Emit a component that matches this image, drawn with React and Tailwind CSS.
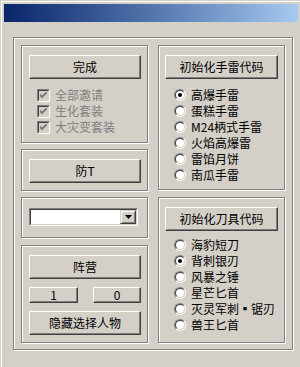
import React from "react";

const FONT = { fontFamily: '"Noto Sans CJK SC", "Liberation Sans", sans-serif' };

function Btn({ children, className = "" }) {
  return (
    <div
      className={
        "flex items-center justify-center bg-[#d4d0c8] text-[12px] leading-none text-black border border-t-white border-l-white border-r-[#404040] border-b-[#404040] shadow-[inset_-1px_-1px_0_#808080] " +
        className
      }
    >
      {children}
    </div>
  );
}

function Group({ children, className = "" }) {
  return (
    <div
      className={
        "border border-[#808080] shadow-[inset_1px_1px_0_#fff,1px_1px_0_#fff] " +
        className
      }
    >
      {children}
    </div>
  );
}

function Check({ label }) {
  return (
    <div className="flex h-[16px] items-center">
      <div className="ml-[8px] flex h-[13px] w-[13px] items-center justify-center border border-t-[#808080] border-l-[#808080] border-r-white border-b-white">
        <div className="flex h-full w-full items-center justify-center border border-t-[#404040] border-l-[#404040] border-r-[#d4d0c8] border-b-[#d4d0c8] bg-[#d4d0c8]">
          <svg width="7" height="7" viewBox="0 0 7 7">
            <path d="M0 2 L2 4 L7 -1 M0 3 L2 5 L7 0 M0 4 L2 6 L7 1" stroke="#808080" strokeWidth="1" fill="none" shapeRendering="crispEdges" />
          </svg>
        </div>
      </div>
      <span className="ml-[5px] text-[12px] leading-none text-[#808080]">{label}</span>
    </div>
  );
}

function Radio({ label, checked }) {
  return (
    <div className="flex h-[16px] items-center">
      <div className="ml-[9px] h-[12px] w-[12px] rounded-full border border-t-[#808080] border-l-[#808080] border-r-white border-b-white">
        <div className="flex h-full w-full items-center justify-center rounded-full border border-t-[#404040] border-l-[#404040] border-r-[#d4d0c8] border-b-[#d4d0c8] bg-white">
          {checked && <div className="h-[4px] w-[4px] rounded-full bg-black" />}
        </div>
      </div>
      <span className="ml-[5px] whitespace-nowrap text-[12px] leading-none text-black">{label}</span>
    </div>
  );
}

export default function App() {
  return (
    <div
      style={FONT}
      className="relative h-[367px] w-[300px] overflow-hidden bg-[#d4d0c8] pt-[4px] shadow-[inset_1px_1px_0_#d4d0c8,inset_2px_2px_0_#fff]"
    >
      <div className="ml-[4px] h-[18px] w-[294px] bg-linear-to-r from-[#0a246a] to-[#a6caf0]" />
      <Group className="ml-[13px] mt-[15px] h-[313px] w-[280px] px-[7px] pt-[7px]">
        <div className="flex gap-[10px]">
          {/* left column */}
          <div className="flex w-[127px] flex-col">
            <Group className="h-[98px] pl-[7px] pr-[6px] pt-[9px]">
              <Btn className="h-[24px]">完成</Btn>
              <div className="mt-[8px]">
                <Check label="全部邀请" />
                <Check label="生化套装" />
                <Check label="大灾变套装" />
              </div>
            </Group>
            <Group className="mt-[6px] h-[42px] pl-[7px] pr-[6px] pt-[9px]">
              <Btn className="h-[24px]">防T</Btn>
            </Group>
            <Group className="mt-[6px] h-[41px] pl-[7px] pt-[10px]">
              <div className="flex h-[18px] w-[109px] border border-t-[#808080] border-l-[#808080] border-r-white border-b-white">
                <div className="flex h-full w-full border border-t-[#404040] border-l-[#404040] border-r-[#d4d0c8] border-b-[#d4d0c8] bg-white">
                  <div className="flex-1" />
                  <div className="flex h-full w-[16px] items-center justify-center border border-t-[#d4d0c8] border-l-[#d4d0c8] border-r-[#404040] border-b-[#404040] bg-[#d4d0c8] shadow-[inset_1px_1px_0_#fff,inset_-1px_-1px_0_#808080]">
                    <svg width="7" height="4" viewBox="0 0 7 4">
                      <path d="M0 0 H7 L3.5 4 Z" fill="#000" />
                    </svg>
                  </div>
                </div>
              </div>
            </Group>
            <Group className="mt-[7px] h-[98px] pl-[7px] pr-[6px] pt-[9px]">
              <Btn className="h-[24px]">阵营</Btn>
              <div className="mt-[8px] flex justify-between">
                <Btn className="h-[16px] w-[49px]">1</Btn>
                <Btn className="h-[16px] w-[48px]">0</Btn>
              </div>
              <Btn className="mt-[8px] h-[24px]">隐藏选择人物</Btn>
            </Group>
          </div>
          {/* right column */}
          <div className="flex w-[127px] flex-col">
            <Group className="h-[145px] pl-[6px] pr-[6px] pt-[9px]">
              <Btn className="h-[24px] w-[113px]">初始化手雷代码</Btn>
              <div className="mt-[8px]">
                <Radio label="高爆手雷" checked />
                <Radio label="蛋糕手雷" />
                <Radio label="M24柄式手雷" />
                <Radio label="火焰高爆雷" />
                <Radio label="雷馅月饼" />
                <Radio label="南瓜手雷" />
              </div>
            </Group>
            <Group className="mt-[7px] h-[146px] pl-[6px] pr-[6px] pt-[9px]">
              <Btn className="h-[24px] w-[113px]">初始化刀具代码</Btn>
              <div className="mt-[6px]">
                <Radio label="海豹短刀" />
                <Radio label="背刺银刃" checked />
                <Radio label="风暴之锤" />
                <Radio label="星芒匕首" />
                <Radio label="灭灵军刺▪锯刃" />
                <Radio label="兽王匕首" />
              </div>
            </Group>
          </div>
        </div>
      </Group>
    </div>
  );
}
